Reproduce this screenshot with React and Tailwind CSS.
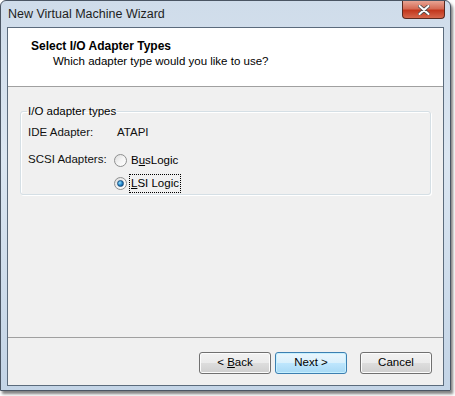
import React from "react";

function Radio({ checked }) {
  return (
    <span className="relative inline-flex w-[13px] h-[13px] rounded-full border border-[#8e8f8f] bg-gradient-to-br from-[#dcdcdc] via-[#f4f4f4] to-[#ffffff] items-center justify-center shrink-0">
      {checked && (
        <span className="w-[7px] h-[7px] rounded-full bg-[radial-gradient(circle_at_35%_35%,#9be3ff,#1a7fc6_55%,#0b3f75)] border border-[#1b4f7e]" />
      )}
    </span>
  );
}

function Button({ children, primary }) {
  return (
    <button
      className={
        primary
          ? "w-[72px] h-[22px] rounded-[3px] border border-[#3c7fb1] bg-[linear-gradient(#eaf6fd_0%,#d9f0fc_50%,#bee6fd_51%,#a7d9f5_100%)] shadow-[inset_0_0_0_1px_#c6f0ff] text-[11.5px] text-black"
          : "w-[72px] h-[22px] rounded-[3px] border border-[#707070] bg-[linear-gradient(#f2f2f2_0%,#ebebeb_50%,#dddddd_51%,#cfcfcf_100%)] shadow-[inset_0_0_0_1px_#fcfcfc] text-[11.5px] text-black"
      }
    >
      {children}
    </button>
  );
}

export default function App() {
  return (
    <div className="w-[455px] h-[396px] bg-white font-['Liberation_Sans',Arial,sans-serif] text-[11.5px] leading-none">
      <div className="w-[451px] h-[391px] rounded-t-[6px] border border-[#4a5563] bg-[linear-gradient(180deg,#cfdcea_0%,#dbe6f1_40%,#c3d4e6_100%)] shadow-[2px_3px_3px_rgba(0,0,0,0.5)] flex flex-col px-[6px] pb-[4px]">
        {/* Title bar */}
        <div className="h-[26px] flex items-start justify-between">
          <span className="pt-[7px] pl-[1px] text-[12.5px] text-[#1e1e1e]">New Virtual Machine Wizard</span>
          <div className="w-[43px] h-[18px] -mr-[1px] rounded-b-[4px] border border-t-0 border-[#5a2a20] bg-[linear-gradient(#e8a493_0%,#d56b55_45%,#c2371d_55%,#d6674c_100%)] flex items-center justify-center">
            <svg width="12" height="10" viewBox="0 0 12 10">
              <path d="M1.5 1 L10.5 9 M10.5 1 L1.5 9" stroke="#4a4a4a" strokeWidth="3.6" strokeLinecap="round" />
              <path d="M1.5 1 L10.5 9 M10.5 1 L1.5 9" stroke="#ffffff" strokeWidth="2" strokeLinecap="round" />
            </svg>
          </div>
        </div>

        {/* Client area */}
        <div className="flex-1 flex flex-col border border-[#5b6b7c] bg-[#f0f0f0]">
          <div className="h-[59px] bg-white border-b border-[#a0a0a0] pl-[23px] pt-[12px] flex flex-col">
            <span className="font-bold text-[12px] text-black">Select I/O Adapter Types</span>
            <span className="pl-[22px] mt-[4px] text-[11.5px] text-black">Which adapter type would you like to use?</span>
          </div>

          <div className="flex-1 px-[12px] pt-[19px]">
            <fieldset className="border border-[#d5dfe5] rounded-[3px] shadow-[inset_1px_1px_0_#ffffff,1px_1px_0_#ffffff] pl-[7px] h-[89px]">
              <legend className="-ml-[1px] px-[1px] text-black">I/O adapter types</legend>
              <div className="flex items-center mt-[9px]">
                <span className="w-[89px] text-[#111]">IDE Adapter:</span>
                <span className="text-[#111]">ATAPI</span>
              </div>
              <div className="flex items-start mt-[13px]">
                <span className="w-[86px] text-[#111] pt-[3px]">SCSI Adapters:</span>
                <div className="flex flex-col gap-[3px]">
                  <label className="flex items-center gap-[2px]">
                    <Radio />
                    <span className="px-[1px] py-[3px] border border-transparent">
                      B<span className="underline">u</span>sLogic
                    </span>
                  </label>
                  <label className="flex items-center gap-[2px]">
                    <Radio checked />
                    <span className="px-[1px] py-[3px] border border-dotted border-black">
                      <span className="underline">L</span>SI Logic
                    </span>
                  </label>
                </div>
              </div>
            </fieldset>
          </div>

          <div className="h-[48px] border-t border-[#a0a0a0] flex items-center justify-end pr-[11px] pt-[3px]">
            <div className="flex items-center">
              <Button>
                &lt; <span className="underline">B</span>ack
              </Button>
              <span className="w-[4px]" />
              <Button primary>Next &gt;</Button>
              <span className="w-[13px]" />
              <Button>Cancel</Button>
            </div>
          </div>
        </div>
      </div>
    </div>
  );
}
